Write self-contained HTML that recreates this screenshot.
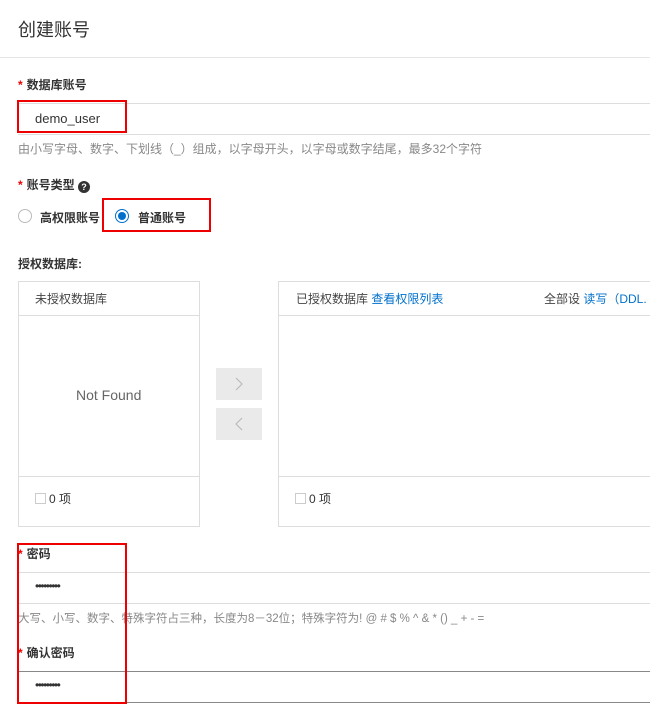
<!DOCTYPE html>
<html><head><meta charset="utf-8"><style>
*{box-sizing:border-box;margin:0;padding:0}
body{width:650px;height:715px;overflow:hidden;background:#fff;font-family:"Liberation Sans","Noto Sans CJK SC",sans-serif;color:#333;font-size:12px;position:relative}
.a{position:absolute;white-space:nowrap}
.hd{left:0;top:0;width:650px;height:58px;border-bottom:1px solid #e6e6e6;background:#fff}
.lbl{font-weight:bold;color:#333;font-size:12px}
.star{color:#e00;margin-right:4px}
.line{left:18px;width:632px;height:1px;background:#ddd}
.help{color:#888;font-size:12px}
.red{border:2px solid #e00}
.box{border:1px solid #ddd}
.btn{background:#eaeaea;width:46px;height:32px}
.btn svg{display:block;margin:8px auto 0}
.cb{width:11px;height:11px;border:1px solid #ccc;display:inline-block;vertical-align:-1px;margin-right:3px}
.pw{font-size:12px;letter-spacing:-1.5px;color:#333}
</style></head><body>
<div class="a hd"></div>
<div class="a" style="left:18px;top:16px;font-size:18px;color:#333">创建账号</div>

<div class="a lbl" style="left:18px;top:76px"><span class="star">*</span>数据库账号</div>
<div class="a line" style="top:103px"></div>
<div class="a line" style="top:134px"></div>
<div class="a" style="left:35px;top:111px;font-size:13px">demo_user</div>
<div class="a red" style="left:17px;top:100px;width:110px;height:33px"></div>
<div class="a help" style="left:18px;top:140px">由小写字母、数字、下划线（_）组成，以字母开头，以字母或数字结尾，最多32个字符</div>

<div class="a lbl" style="left:18px;top:176px"><span class="star">*</span>账号类型 <span style="display:inline-block;width:12px;height:12px;border-radius:50%;background:#333;color:#fff;font-size:9px;text-align:center;line-height:12px;vertical-align:-1px">?</span></div>
<div class="a" style="left:18px;top:209px;width:14px;height:14px;border:1px solid #bbb;border-radius:50%"></div>
<div class="a lbl" style="left:40px;top:209px">高权限账号</div>
<div class="a" style="left:115px;top:209px;width:14px;height:14px;border:1px solid #0070cc;border-radius:50%"><div style="margin:2px;width:8px;height:8px;border-radius:50%;background:#0070cc"></div></div>
<div class="a lbl" style="left:138px;top:209px">普通账号</div>
<div class="a red" style="left:102px;top:198px;width:109px;height:34px"></div>

<div class="a lbl" style="left:18px;top:255px">授权数据库:</div>

<div class="a box" style="left:18px;top:281px;width:182px;height:246px"></div>
<div class="a" style="left:18px;top:315px;width:182px;height:1px;background:#ddd"></div>
<div class="a" style="left:18px;top:476px;width:182px;height:1px;background:#ddd"></div>
<div class="a" style="left:35px;top:290px;color:#444">未授权数据库</div>
<div class="a" style="left:76px;top:387px;font-size:14px;color:#666">Not Found</div>
<div class="a" style="left:35px;top:490px;color:#333"><span class="cb"></span>0 项</div>

<div class="a btn" style="left:216px;top:368px"><svg width="10" height="16" viewBox="0 0 10 16"><path d="M2 2 L8 8 L2 14" fill="none" stroke="#bbb" stroke-width="1.2"/></svg></div>
<div class="a btn" style="left:216px;top:408px"><svg width="10" height="16" viewBox="0 0 10 16"><path d="M8 2 L2 8 L8 14" fill="none" stroke="#bbb" stroke-width="1.2"/></svg></div>

<div class="a box" style="left:278px;top:281px;width:380px;height:246px"></div>
<div class="a" style="left:278px;top:315px;width:372px;height:1px;background:#ddd"></div>
<div class="a" style="left:278px;top:476px;width:372px;height:1px;background:#ddd"></div>
<div class="a" style="left:296px;top:290px;color:#444">已授权数据库 <span style="color:#0070cc">查看权限列表</span></div>
<div class="a" style="left:544px;top:290px;color:#444">全部设 <span style="color:#0070cc">读写（DDL.</span></div>
<div class="a" style="left:295px;top:490px"><span class="cb"></span>0 项</div>

<div class="a lbl" style="left:18px;top:545px"><span class="star">*</span>密码</div>
<div class="a line" style="top:572px"></div>
<div class="a line" style="top:603px"></div>
<div class="a pw" style="left:35px;top:579px">•••••••••</div>
<div class="a help" style="left:18px;top:610px;font-size:11.5px">大写、小写、数字、特殊字符占三种，长度为8－32位；特殊字符为! @ # $ % ^ &amp; * () _ + - =</div>
<div class="a lbl" style="left:18px;top:644px"><span class="star">*</span>确认密码</div>
<div class="a line" style="top:671px;background:#888"></div>
<div class="a line" style="top:702px;background:#888"></div>
<div class="a pw" style="left:35px;top:678px">•••••••••</div>
<div class="a red" style="left:17px;top:543px;width:110px;height:161px"></div>
</body></html>
